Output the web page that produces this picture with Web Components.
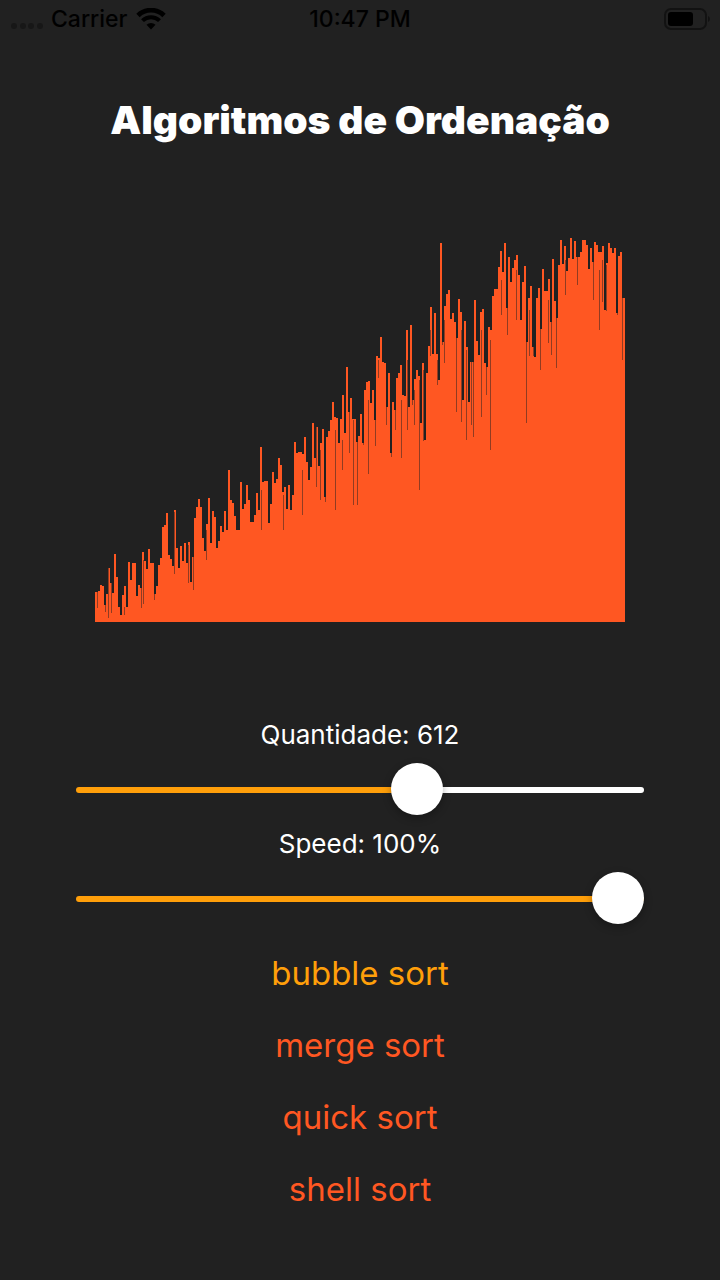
<!DOCTYPE html>
<html lang="pt-BR">
<head>
<meta charset="utf-8">
<meta name="viewport" content="width=device-width, initial-scale=1">
<title>Algoritmos de Ordenação</title>
<style>
  body { margin: 0; background: #212121; color: #fff; font-family: Inter, Roboto, sans-serif; }
</style>
</head>
<body>
<sort-app></sort-app>
<script>
function define(name, html, setup) {
  const template = document.createElement('template');
  template.innerHTML = html;
  customElements.define(name, class extends HTMLElement {
    connectedCallback() {
      if (this.shadowRoot) return;
      const root = this.attachShadow({ mode: 'open' });
      root.append(template.content.cloneNode(true));
      if (setup) setup(this, root);
    }
  });
}

define('status-bar', `
  <style>
    :host { display: grid; grid-template-columns: 1fr auto 1fr; align-items: center; height: 38px; padding: 0 10px; color: #000; font-size: 23px; line-height: 28px; font-weight: 500; }
    .left { display: flex; align-items: center; gap: 8px; }
    .right { display: flex; justify-content: flex-end; }
    svg { display: block; }
  </style>
  <div class="left">
    <svg width="33" height="28" fill="#171717" aria-hidden="true"><circle cx="4" cy="21" r="3"/><circle cx="13" cy="21" r="3"/><circle cx="21" cy="21" r="3"/><circle cx="30" cy="21" r="3"/></svg>
    <span><slot name="carrier"></slot></span>
    <svg width="30" height="22" viewBox="0 0 30 22" aria-hidden="true">
      <path d="M2 7.500A18.500 18.500 0 0 1 28 7.500" fill="none" stroke="#000" stroke-width="4.800"/>
      <path d="M6.500 12.700A12 12 0 0 1 23.500 12.700" fill="none" stroke="#000" stroke-width="4"/>
      <path d="M10.500 16.800A6.500 6.500 0 0 1 19.500 16.800L15 21.500Z" fill="#000"/>
    </svg>
  </div>
  <span><slot name="time"></slot></span>
  <div class="right">
    <svg width="46" height="22" viewBox="0 0 46 22" aria-hidden="true">
      <rect x="1" y="1" width="41" height="20" rx="6" fill="none" stroke="#121212" stroke-width="2"/>
      <rect x="4" y="4" width="25" height="14" rx="3" fill="#000"/>
      <path d="M44 8Q46 9 46 11T44 14Z" fill="#121212"/>
    </svg>
  </div>`);

// Top edge of every two-pixel column, measured downwards in thirds of a pixel from each section's base line.
const sections = [
  [480, [335,335,333,316,318,375,342,264,310,340,223,290,380,405,345,318,380,245,300,250,250,348,315,325,215,243,267,208,250,250,342,318,256,235,140,135,99,225,238,258,90,203,265,198,243,188,250,186,305,232,115,82,57,82,173,212,132,53,190,92,110,205,183,138,155,92,150]],
  [380, [270,360,370,408,450,450,307,388,372,315,360,425,427,405,338,390,202,305,303,303,430,372,275,310,297,235,255,335,322,388,316,390,345,186,220,215,217,223,170,247,300,260,130,235,140,258,188,147,350,172,153,120,67,111,113,188,117,45,160,-39,97]],
  [230, [505,568,568,635,618,552,640,480,457,453,520,480,570,378,383,321,395,398,530,428,670,516,540,443,430,405,495,498,300,530,286,510,447,420,438,580,398,630,430,347,232,372,248,372,450,38,335,228,193,180,268,248,275,325,208,245,510,273,350,515,395,395,210,332,375,245,237,398,410,291]],
  [230, [300,197,177,177,112,62,125,38,235,80,155,115,90,76,135,270,155,108,335,205,167,350,380,205,175,298,117,183,183,148,275,87,213,263,105,30,103,48,123,85,24,87,32,80,80,65,30,30,45,118,53,95,36,45,65,65,47,240,100,38,55,70,53,250,78,66,203]]
];
// Thin gaps between bars: x, top, bottom.
const gaps = [[97,592,608],[105,590,612],[108,568,618],[111,583,613],[121,595,614],[124,607,615],[141,552,608],[143,560,604],[154,560,600],[174,512,574],[178,545,565],[188,545,583],[193,550,590],[206,530,560],[261,490,530],[283,495,530],[302,470,515],[316,425,487],[320,450,500],[325,475,502],[335,430,510],[342,440,470],[349,390,453],[353,420,505],[357,440,505],[363,425,445],[368,400,474],[375,410,446],[378,360,378],[386,380,425],[391,430,457],[395,410,430],[401,400,458],[407,360,430],[412,350,405],[414,390,425],[419,380,490],[423,370,441],[430,330,356],[437,360,385],[442,300,345],[444,320,363],[456,320,412],[461,330,422],[466,350,440],[471,340,425],[473,340,437],[481,330,417],[486,360,395],[490,340,450],[501,280,315],[507,270,335],[516,270,320],[521,280,320],[526,320,423],[529,310,356],[533,340,356],[540,300,370],[548,300,343],[551,300,355],[556,310,368],[565,260,295],[577,250,285],[593,260,300],[599,270,330],[602,260,302],[606,265,311],[617,260,315],[622,280,360]];

define('bar-chart', `
  <style>
    :host { display: block; aspect-ratio: 265 / 192; }
    svg { display: block; width: 100%; height: 100%; }
  </style>
  <svg viewBox="0 0 530 384" preserveAspectRatio="none" shape-rendering="crispEdges" role="img" aria-label="Valores"><path class="bars" fill="#ff5722"/><path class="gaps" fill="#212121" opacity="0.5"/></svg>`,
  (host, root) => {
    let d = 'M0 384', x = 1;
    for (const [base, list] of sections)
      for (const v of list) { d += 'V' + Math.round(base + v / 3 - 238) + 'H' + x; x += 2; }
    root.querySelector('.bars').setAttribute('d', d + 'H530V384Z');
    root.querySelector('.gaps').setAttribute('d', gaps.map(([gx, t, b]) => `M${gx - 95} ${t - 238}h1V${b - 238}h-1Z`).join(''));
  });

define('labeled-slider', `
  <style>
    :host { display: flex; flex-direction: column; gap: 13px; }
    label { text-align: center; font-size: 26px; line-height: 32px; }
    input { -webkit-appearance: none; appearance: none; display: block; width: 100%; height: 52px; margin: 0; background: none; }
    input::-webkit-slider-runnable-track { height: 6px; border-radius: 3px; background: linear-gradient(to right, #ff9f0a var(--fill), #fff var(--fill)); }
    input::-webkit-slider-thumb { -webkit-appearance: none; width: 52px; height: 52px; margin-top: -24px; border-radius: 50%; background: #fff; box-shadow: 0 3px 8px rgba(0, 0, 0, .3); }
  </style>
  <label for="range"><slot></slot></label>
  <input id="range" type="range">`,
  (host, root) => {
    const input = root.querySelector('input');
    input.min = host.getAttribute('min');
    input.max = host.getAttribute('max');
    input.value = host.getAttribute('value');
    const paint = () => input.style.setProperty('--fill', (input.value - input.min) / (input.max - input.min) * 100 + '%');
    input.addEventListener('input', () => {
      paint();
      host.textContent = host.getAttribute('name') + ': ' + input.value + (host.getAttribute('unit') || '');
    });
    paint();
  });

define('sort-button', `
  <style>
    :host { display: block; }
    button { display: block; margin: 0 auto; padding: 0 16px; border: 0; background: none; color: #ff5722; font: inherit; font-size: 33px; line-height: 72px; }
    :host([active]) button { color: #ff9f0a; }
  </style>
  <button type="button"><slot></slot></button>`);

define('sort-app', `
  <style>
    :host { display: block; }
    h1 { margin: 58px 0 0; text-align: center; font-size: 39px; line-height: 48px; font-weight: 900; }
    bar-chart { margin: 94px 95px 0; }
    .sliders { display: flex; flex-direction: column; gap: 12px; margin: 97px 76px 0; }
    .sorts { margin: 12px 0 40px; }
  </style>
  <status-bar><span slot="carrier">Carrier</span><span slot="time">10:47 PM</span></status-bar>
  <main>
    <h1>Algoritmos de Ordenação</h1>
    <bar-chart></bar-chart>
    <div class="sliders">
      <labeled-slider name="Quantidade" min="5" max="1000" value="612">Quantidade: 612</labeled-slider>
      <labeled-slider name="Speed" unit="%" min="0" max="100" value="100">Speed: 100%</labeled-slider>
    </div>
    <div class="sorts">
      <sort-button active>bubble sort</sort-button>
      <sort-button>merge sort</sort-button>
      <sort-button>quick sort</sort-button>
      <sort-button>shell sort</sort-button>
    </div>
  </main>`);
</script>
</body>
</html>
